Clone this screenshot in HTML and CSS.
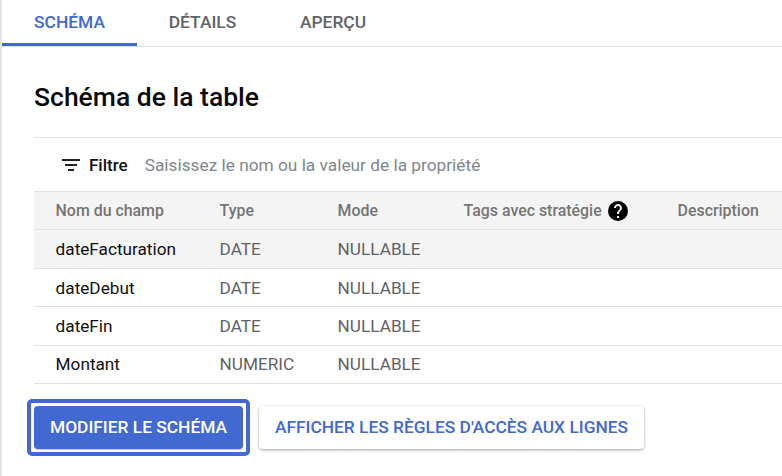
FILE: index.html
```html
<!DOCTYPE html>
<html lang="fr">
<head>
<meta charset="utf-8">
<title>Schéma de la table</title>
<link rel="stylesheet" href="styles.css">
</head>
<body>
<div class="page">
  <nav class="tabs">
    <a class="tab active">SCHÉMA</a>
    <a class="tab">DÉTAILS</a>
    <a class="tab">APERÇU</a>
  </nav>
  <main class="content">
    <h1 class="title">Schéma de la table</h1>
    <div class="filter">
      <svg class="filter-icon" width="18" height="12" viewBox="0 0 18 12"><path d="M0 0h18v2H0zM3 5h12v2H3zM6 10h6v2H6z" fill="#202124"/></svg>
      <span class="filter-label">Filtre</span>
      <span class="filter-hint">Saisissez le nom ou la valeur de la propriété</span>
    </div>
    <div class="table">
      <div class="row head">
        <span>Nom du champ</span><span>Type</span><span>Mode</span>
        <span class="tags">Tags avec stratégie
          <svg class="help" width="20" height="20" viewBox="2 2 20 20"><path d="M12 2a10 10 0 1 0 0 20 10 10 0 0 0 0-20zm1 17h-2v-2h2v2zm2.07-7.75-.9.92C13.45 12.9 13 13.5 13 15h-2v-.5c0-1.1.45-2.1 1.17-2.83l1.24-1.26c.37-.36.59-.86.59-1.41 0-1.1-.9-2-2-2s-2 .9-2 2H8c0-2.21 1.79-4 4-4s4 1.790 4 4c0 .88-.36 1.680-.93 2.250z" fill="#000"/></svg>
        </span>
        <span>Description</span>
      </div>
      <div class="row shaded"><span class="name">dateFacturation</span><span>DATE</span><span>NULLABLE</span><span></span><span></span></div>
      <div class="row"><span class="name">dateDebut</span><span>DATE</span><span>NULLABLE</span><span></span><span></span></div>
      <div class="row"><span class="name">dateFin</span><span>DATE</span><span>NULLABLE</span><span></span><span></span></div>
      <div class="row"><span class="name">Montant</span><span>NUMERIC</span><span>NULLABLE</span><span></span><span></span></div>
    </div>
    <div class="actions">
      <button class="btn primary">MODIFIER LE SCHÉMA</button>
      <button class="btn secondary">AFFICHER LES RÈGLES D'ACCÈS AUX LIGNES</button>
    </div>
  </main>
</div>
</body>
</html>
```
FILE: styles.css
```css
* { box-sizing: border-box; }
html, body { margin: 0; padding: 0; background: #fff; }
body { width: 782px; height: 476px; overflow: hidden; font-family: Roboto, "Liberation Sans", sans-serif; }
.page { height: 476px; border-left: 2px solid #e3e3e3; }
.tabs { display: flex; height: 47px; border-bottom: 1px solid #e0e0e0; }
.tab { display: flex; align-items: center; justify-content: center; height: 46px; font-size: 17.4px; font-weight: 500; color: #5f6368; padding-bottom: 2px; }
.tab.active { color: #4169d1; border-bottom: 3px solid #4169d1; padding-bottom: 0; width: 135px; }
.tab:nth-child(2) { width: 131px; }
.tab:nth-child(3) { width: 130px; }
.content { padding: 0 0 0 32px; }
.title { margin: 0; height: 90px; padding-top: 33px; font-size: 26.5px; line-height: 34px; font-weight: 500; color: #0a0a0a; }
.filter { display: flex; align-items: center; height: 54px; border-top: 1px solid #e0e0e0; padding-left: 28px; }
.filter-icon { margin-right: 9px; }
.filter-label { font-size: 17px; font-weight: 500; color: #111; margin-right: 17px; line-height: 20px; padding-top: 1px; }
.filter-hint { font-size: 17.3px; color: #80868b; line-height: 20px; padding-top: 1px; }
.table { border-top: 1px solid #e0e0e0; }
.row { display: grid; grid-template-columns: 164px 118px 126px 214px 1fr; align-items: center; height: 38.4px; padding-left: 21.6px; padding-top: .4px; border-bottom: 1px solid #e0e0e0; font-size: 17.2px; color: #5f6368; }
.row.head { background: #f4f4f4; font-size: 15.9px; font-weight: 500; color: #757575; }
.row.shaded { background: #f4f4f4; }
.name { color: #111; }
.tags { display: flex; align-items: center; gap: 6.5px; white-space: nowrap; }
.help { flex: none; }
.actions { display: flex; align-items: center; gap: 16px; margin-top: 22px; }
.btn { height: 43px; border: 0; border-radius: 4px; font-family: inherit; font-size: 17.35px; font-weight: 500; padding: 0; white-space: nowrap; }
.btn.primary { position: relative; width: 209px; background: #4169d1; color: #fff; box-shadow: 0 1px 1px rgba(60,64,67,.3); }
.btn.primary::after { content: ""; position: absolute; inset: -7px; border: 4px solid #4169d1; border-radius: 5px; }
.btn.secondary { width: 385px; background: #fff; color: #4169d1; box-shadow: 0 1px 3px rgba(60,64,67,.5); }
```
